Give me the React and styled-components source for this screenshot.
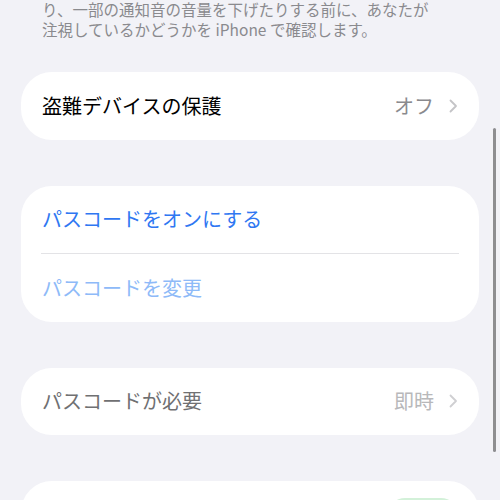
import styled, { createGlobalStyle } from "styled-components";

const GlobalStyle = createGlobalStyle`
  html, body {
    margin: 0;
    padding: 0;
    background: #f2f2f7;
  }
  body {
    font-family: "Noto Sans CJK JP", "Noto Sans", sans-serif;
    overflow: hidden;
  }
`;

const Chevron = ({ color }) => (
  <svg width="10" height="16" viewBox="0 0 10 16" fill="none">
    <path d="M2.5 2.5l5.5 5.5-5.5 5.5" stroke={color} strokeWidth="1.8" strokeLinecap="round" strokeLinejoin="round" />
  </svg>
);

const App = () => {
  return (
    <Screen>
      <GlobalStyle />
      <Footer>
        <FooterLine>り、一部の通知音の音量を下げたりする前に、あなたが</FooterLine>
        <FooterLine>注視しているかどうかを iPhone で確認します。</FooterLine>
      </Footer>

      <Group>
        <Row>
          <Label>盗難デバイスの保護</Label>
          <Detail>
            <Value>オフ</Value>
            <Chevron color="#c4c4c7" />
          </Detail>
        </Row>
      </Group>

      <Group>
        <Row>
          <Label tone="blue">パスコードをオンにする</Label>
        </Row>
        <Divider />
        <Row>
          <Label tone="blueDim">パスコードを変更</Label>
        </Row>
      </Group>

      <Group>
        <Row>
          <Label tone="dim">パスコードが必要</Label>
          <Detail>
            <Value dim>即時</Value>
            <Chevron color="#cfcfd2" />
          </Detail>
        </Row>
      </Group>

      <Group>
        <Row>
          <Label />
          <Toggle />
        </Row>
      </Group>

      <ScrollBar />
    </Screen>
  );
};

const tones = {
  default: "#000000",
  blue: "#2f77f2",
  blueDim: "#8ebaf8",
  dim: "#707072",
};

const Screen = styled.div`
  position: relative;
  width: 500px;
  height: 500px;
  overflow: hidden;
  box-sizing: border-box;
  padding: 0 21px;
  display: flex;
  flex-direction: column;
  gap: 46px;
`;

const Footer = styled.div`
  margin: 0 0 -13px;
  padding: 0 21px;
  display: flex;
  flex-direction: column;
  color: #8a8a8e;
`;

const FooterLine = styled.span`
  font-size: 15.5px;
  line-height: 19.5px;
  height: 19.5px;
  white-space: nowrap;
`;

const Group = styled.section`
  background: #ffffff;
  border-radius: 31px;
  padding: 0 21px;
  display: flex;
  flex-direction: column;
  flex-shrink: 0;
`;

const Row = styled.div`
  height: 67.5px;
  display: flex;
  align-items: center;
  justify-content: space-between;
`;

const Label = styled.span`
  font-size: 20px;
  line-height: 24px;
  color: ${(p) => tones[p.tone || "default"]};
`;

const Detail = styled.div`
  display: flex;
  align-items: center;
  gap: 14px;
`;

const Value = styled.span`
  font-size: 20px;
  line-height: 24px;
  color: ${(p) => (p.dim ? "#b8b8ba" : "#8a8a8e")};
`;

const Divider = styled.div`
  height: 1px;
  background: #e3e3e6;
  margin: 0 -1px;
`;

const Toggle = styled.div`
  width: 70px;
  height: 34px;
  border-radius: 17px;
  background: #d3f1d9;
  align-self: flex-start;
  margin-top: 17px;
`;

const ScrollBar = styled.div`
  position: absolute;
  right: 4px;
  top: 128px;
  width: 3px;
  height: 324px;
  border-radius: 2px;
  background: #8e8e91;
`;

export default App;
